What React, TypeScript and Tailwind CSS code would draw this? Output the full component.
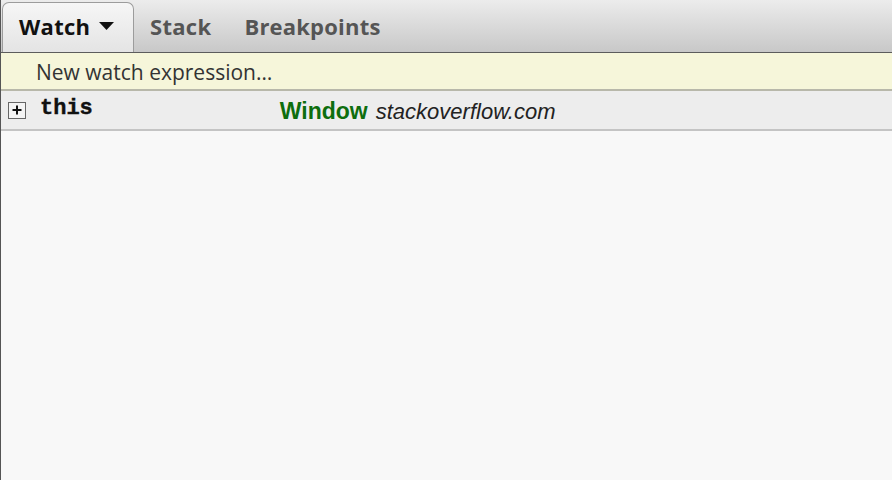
import React from "react";

export default function App() {
  return (
    <div className="w-[892px] h-[480px] bg-[#f8f8f8] border-l border-[#555] flex flex-col overflow-hidden">
      <div className="h-[53px] flex items-end bg-gradient-to-b from-[#ececec] to-[#c8c8c8] border-b border-[#5c5c5c] shrink-0">
        <div className="ml-[1px] h-[50px] w-[132px] rounded-t-[7px] border border-b-0 border-[#9c9c9c] bg-gradient-to-b from-[#f6f6f6] to-[#e4e4e4] flex items-center pl-[16px] gap-[9px]">
          <span className="font-['Open_Sans'] font-bold text-[22px] text-[#111] leading-none pb-[3px] tracking-[0.3px]">Watch</span>
          <svg width="15" height="9" viewBox="0 0 15 9" className="mb-[2px]">
            <polygon points="0,0 15,0 7.5,8" fill="#111" />
          </svg>
        </div>
        <div className="h-[50px] flex items-center pl-[16px] font-['Open_Sans'] font-bold text-[22px] text-[#555] leading-none pb-[3px] tracking-[0.3px]">Stack</div>
        <div className="h-[50px] flex items-center pl-[33px] font-['Open_Sans'] font-bold text-[22px] text-[#555] leading-none pb-[3px] tracking-[0.2px]">Breakpoints</div>
      </div>
      <div className="h-[38px] shrink-0 bg-[#f6f6da] border-b-2 border-[#b8b8aa] flex items-center pl-[35px] pt-[2px] font-['Open_Sans'] text-[21px] text-[#333] leading-none">
        New watch expression…
      </div>
      <div className="h-[40px] shrink-0 bg-[#ededed] border-b-2 border-[#c4c4c4] flex items-center">
        <div className="ml-[7px] w-[18px] h-[17px] border border-[#666] bg-[#f4f4f4] flex items-center justify-center">
          <svg width="10" height="10" viewBox="0 0 10 10">
            <rect x="0.5" y="4" width="9" height="2" fill="#111" />
            <rect x="4" y="0.5" width="2" height="9" fill="#111" />
          </svg>
        </div>
        <span className="ml-[14px] font-['Liberation_Mono',monospace] font-bold text-[22px] text-[#111] leading-none pb-[2px] [-webkit-text-stroke:0.4px_#111]">this</span>
        <span className="ml-[187px] font-['Liberation_Sans',sans-serif] font-bold text-[23px] text-[#0e6e0e] leading-none pt-[3px]">Window</span>
        <span className="ml-[8px] font-['Liberation_Sans',sans-serif] italic text-[22px] text-[#222] leading-none pt-[3px]">stackoverflow.com</span>
      </div>
      <div className="flex-1" />
    </div>
  );
}
